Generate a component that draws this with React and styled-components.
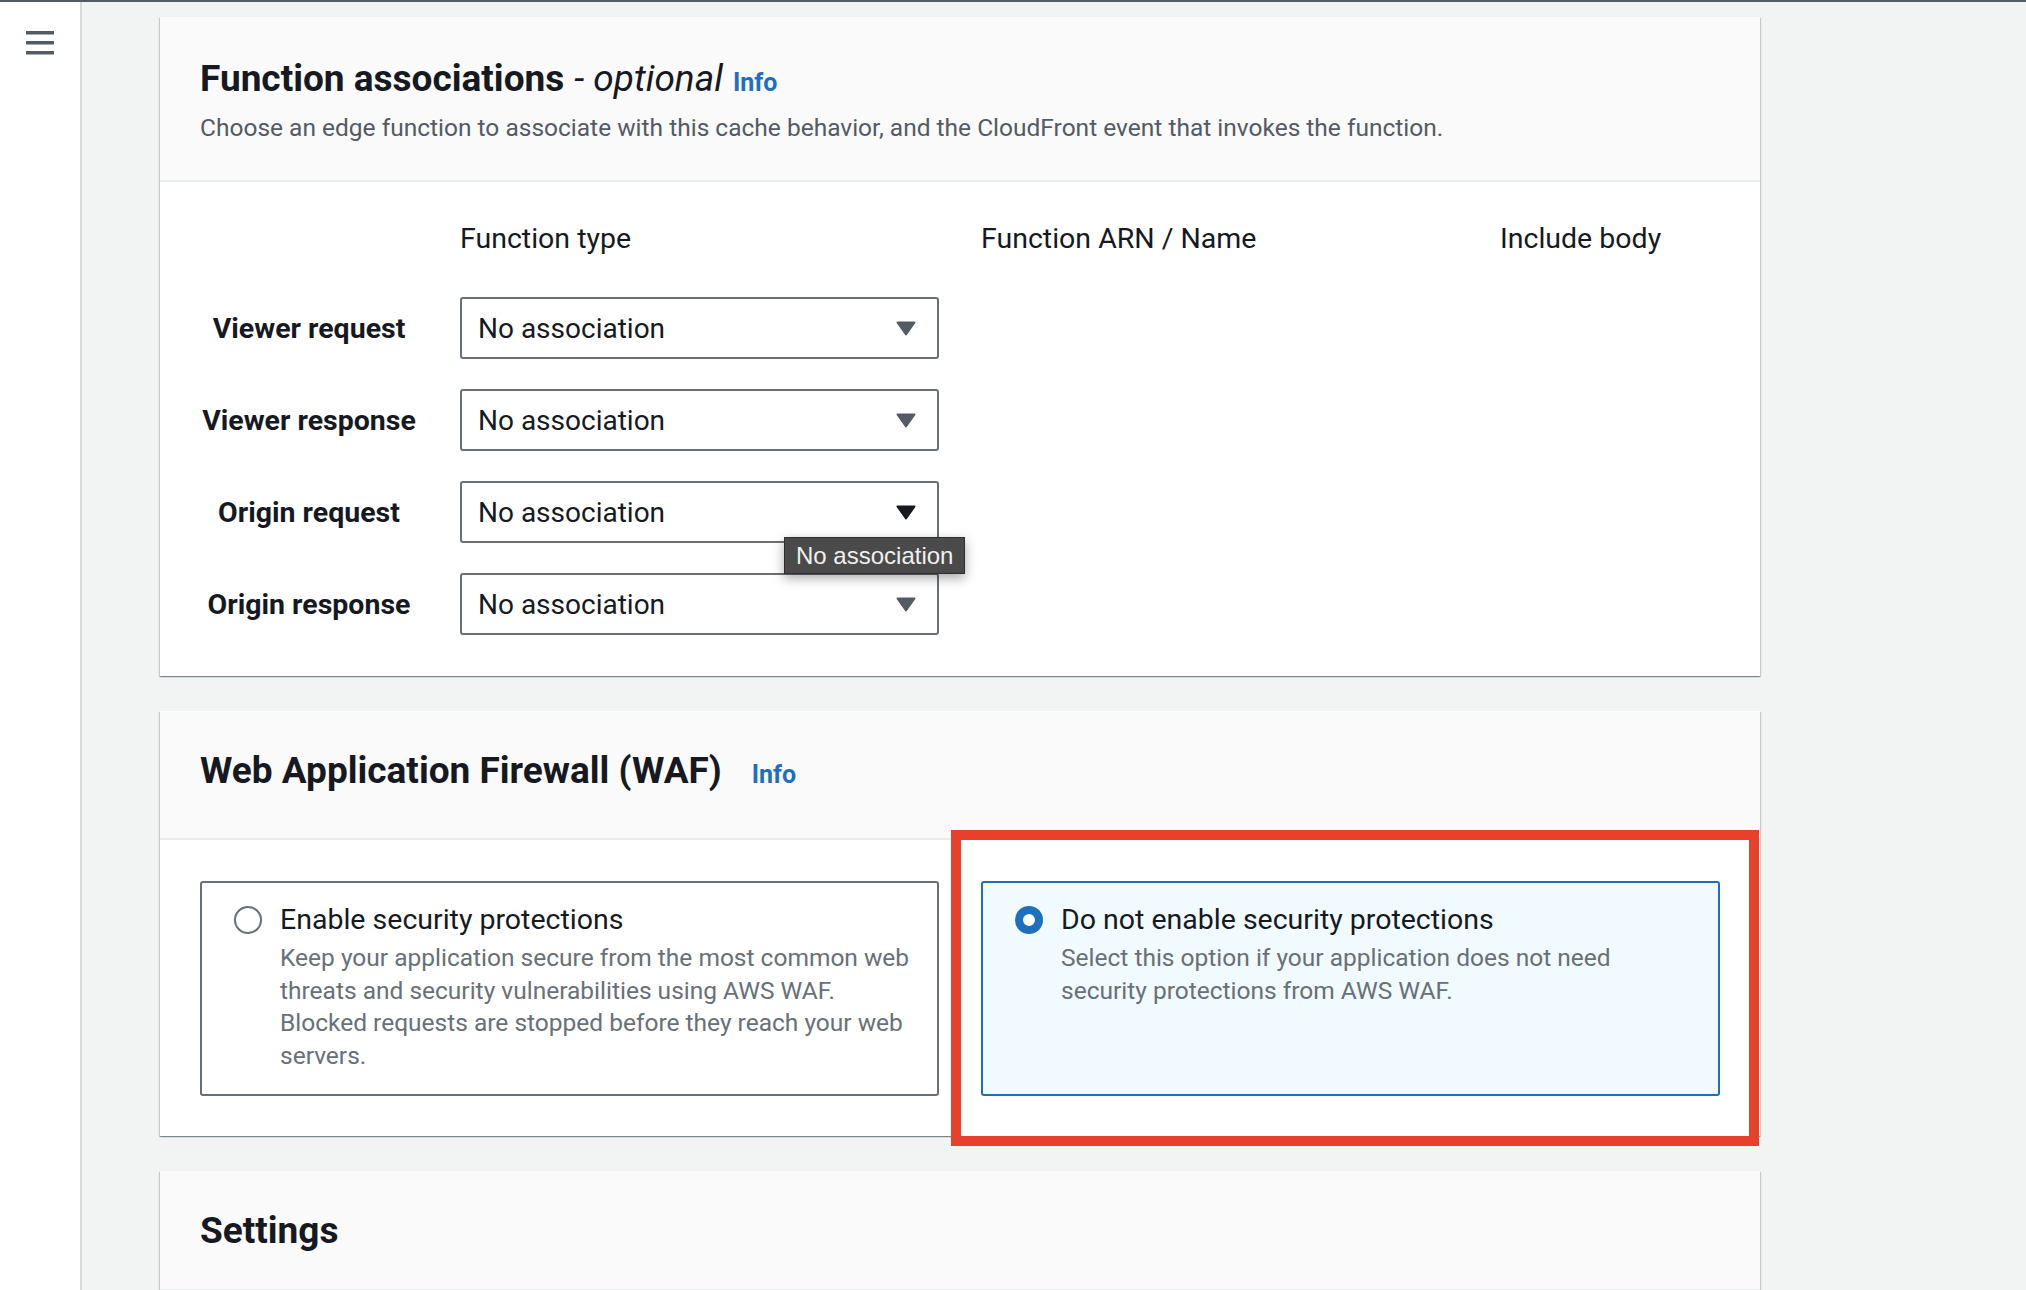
import React from 'react'
import styled, { createGlobalStyle } from 'styled-components'

const GlobalStyle = createGlobalStyle`
  html, body {
    margin: 0;
    padding: 0;
    background: #f2f3f3;
    font-family: Roboto, "Noto Sans", "Liberation Sans", sans-serif;
    color: #16191f;
  }
  * { box-sizing: border-box; }
`

const Page = styled.div`
  min-height: 100vh;
  border-top: 2px solid #545b64;
  display: flex;
`

const Sidebar = styled.aside`
  width: 82px;
  flex-shrink: 0;
  background: #fff;
  border-right: 2px solid #d5dbdb;
  padding: 27px 0 0 26px;
`

const MenuButton = styled.button`
  border: 0;
  background: none;
  padding: 0;
  width: 28px;
  height: 28px;
  cursor: pointer;
  display: block;
`

const Main = styled.main`
  flex: 1;
  padding: 15px 0 0 78px;
  display: flex;
  flex-direction: column;
  gap: 35px;
`

const Card = styled.section`
  position: relative;
  width: 1600px;
  background: #fff;
  box-shadow: 0 1px 1px 0 rgba(0, 28, 36, 0.3), 1px 1px 1px 0 rgba(0, 28, 36, 0.15),
    -1px 1px 1px 0 rgba(0, 28, 36, 0.15);
`

const CardHeader = styled.header`
  background: #fafafa;
  border-bottom: 2px solid #eaeded;
  padding: ${p => p.$pad || '38px 40px 36px'};
`

const Title = styled.h2`
  margin: 0;
  font-size: 37px;
  line-height: 44px;
  font-weight: 700;
  display: flex;
  align-items: baseline;
  gap: ${p => p.$gap || 10}px;
`

const Optional = styled.span`
  font-weight: 400;
  font-style: italic;
`

const InfoLink = styled.a`
  color: #1f6fbf;
  font-size: 25px;
  font-weight: 700;
  text-decoration: none;
`

const Description = styled.p`
  margin: 7px 0 0;
  font-size: 24.5px;
  line-height: 32px;
  color: #545b64;
`

const CardBody = styled.div`
  padding: ${p => p.$pad || '40px'};
`

const AssocGrid = styled.div`
  display: grid;
  grid-template-columns: 218px 479px 477px 1fr;
  column-gap: 42px;
  row-gap: 30px;
  align-items: center;
`

const ColHead = styled.div`
  font-size: 28.5px;
  line-height: 32px;
  margin-bottom: 12px;
`

const RowLabel = styled.label`
  font-size: 28.5px;
  font-weight: 700;
  text-align: center;
`

const SelectBox = styled.div`
  position: relative;
  height: 62px;
  border: 2px solid #687078;
  border-radius: 3px;
  background: #fff;
  display: flex;
  align-items: center;
  justify-content: space-between;
  padding: 0 21px 0 16px;
  font-size: 28px;
  cursor: pointer;
`

const Caret = styled.svg`
  width: 20px;
  height: 15px;
  fill: ${p => (p.$hover ? '#16191f' : '#545b64')};
  stroke: ${p => (p.$hover ? '#16191f' : '#545b64')};
`

const Tooltip = styled.div`
  position: absolute;
  left: 322px;
  top: 54px;
  z-index: 2;
  background: #4a4a4a;
  border: 1px solid #2e2e2e;
  color: #f0f0f0;
  font-family: "Liberation Sans", Arial, sans-serif;
  font-size: 24px;
  line-height: 35px;
  padding: 0 11px;
  white-space: nowrap;
  box-shadow: 0 4px 12px rgba(0, 0, 0, 0.35);
`

const Tiles = styled.div`
  display: grid;
  grid-template-columns: 739px 739px;
  column-gap: 42px;
`

const Tile = styled.label`
  height: 215px;
  border: 2px solid ${p => (p.$checked ? '#1f6fbf' : '#687078')};
  background: ${p => (p.$checked ? '#f1faff' : '#fff')};
  border-radius: 3px;
  padding: 19px 10px 0 32px;
  display: flex;
  gap: 18px;
  cursor: pointer;
`

const Radio = styled.span`
  flex-shrink: 0;
  width: 28px;
  height: 28px;
  margin-top: 4px;
  border-radius: 50%;
  border: ${p => (p.$checked ? '8.5px solid #1f6fbf' : '2px solid #687078')};
  background: #fff;
`

const TileTitle = styled.div`
  font-size: 28.5px;
  line-height: 36px;
`

const TileText = styled.div`
  margin-top: 4px;
  font-size: 24.5px;
  line-height: 32.5px;
  color: #687078;
  max-width: 636px;
`

const Highlight = styled.div`
  position: absolute;
  left: 791px;
  top: 119px;
  width: 808px;
  height: 316px;
  border: 10px solid #e8412b;
  pointer-events: none;
`

const rows = ['Viewer request', 'Viewer response', 'Origin request', 'Origin response']

function Select({ hover }) {
  return (
    <SelectBox>
      No association
      <Caret $hover={hover} viewBox="0 0 20 15">
        <path d="M1.5 1.5 H18.5 L10 13.5 Z" strokeWidth="2" strokeLinejoin="round" />
      </Caret>
      {hover && <Tooltip>No association</Tooltip>}
    </SelectBox>
  )
}

export default function App() {
  return (
    <>
      <GlobalStyle />
      <Page>
        <Sidebar>
          <MenuButton aria-label="Open navigation">
            <svg width="28" height="28" viewBox="0 0 28 28">
              <rect x="0" y="2" width="28" height="3.5" fill="#545b64" />
              <rect x="0" y="12" width="28" height="3.5" fill="#545b64" />
              <rect x="0" y="22" width="28" height="3.5" fill="#545b64" />
            </svg>
          </MenuButton>
        </Sidebar>
        <Main>
          <Card>
            <CardHeader $pad="40px 40px 36px">
              <Title>
                <span>Function associations</span>
                <Optional>- optional</Optional>
                <InfoLink href="#">Info</InfoLink>
              </Title>
              <Description>
                Choose an edge function to associate with this cache behavior, and the CloudFront event that invokes the function.
              </Description>
            </CardHeader>
            <CardBody $pad="41px 40px 41px">
              <AssocGrid>
                <div />
                <ColHead>Function type</ColHead>
                <ColHead>Function ARN / Name</ColHead>
                <ColHead>Include body</ColHead>
                {rows.map(r => (
                  <React.Fragment key={r}>
                    <RowLabel>{r}</RowLabel>
                    <Select hover={r === 'Origin request'} />
                    <div />
                    <div />
                  </React.Fragment>
                ))}
              </AssocGrid>
            </CardBody>
          </Card>

          <Card>
            <CardHeader $pad="38px 40px 41px">
              <Title $gap={30}>
                <span>Web Application Firewall (WAF)</span>
                <InfoLink href="#">Info</InfoLink>
              </Title>
            </CardHeader>
            <CardBody $pad="41px 40px 40px">
              <Tiles>
                <Tile>
                  <Radio />
                  <div>
                    <TileTitle>Enable security protections</TileTitle>
                    <TileText>
                      Keep your application secure from the most common web threats and security vulnerabilities using AWS WAF. Blocked requests are stopped before they reach your web servers.
                    </TileText>
                  </div>
                </Tile>
                <Tile $checked>
                  <Radio $checked />
                  <div>
                    <TileTitle>Do not enable security protections</TileTitle>
                    <TileText>
                      Select this option if your application does not need security protections from AWS WAF.
                    </TileText>
                  </div>
                </Tile>
              </Tiles>
            </CardBody>
            <Highlight />
          </Card>

          <Card>
            <CardHeader>
              <Title>Settings</Title>
            </CardHeader>
            <CardBody />
          </Card>
        </Main>
      </Page>
    </>
  )
}
